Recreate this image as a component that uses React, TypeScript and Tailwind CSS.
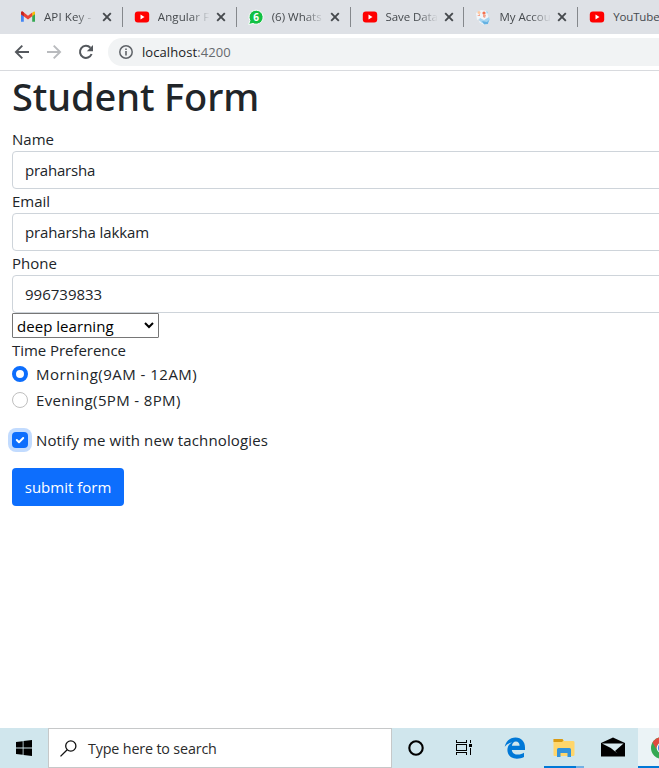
import React from 'react';

function Gmail() {
  return (
    <svg width="16" height="16" viewBox="0 0 16 16">
      <path d="M1 3.5v9.2h2.8V6.2z" fill="#4285f4" />
      <path d="M15 3.5v9.2h-2.8V6.2z" fill="#34a853" />
      <path d="M12.2 3.8L14 2.6q1-.2 1 1.2v1.4l-2.8 2z" fill="#fbbc04" />
      <path d="M1 5.2V3.8q0-1.6 1.6-1.2L8 6.8l4.2-3.2v3.6L8 10.4z" fill="#ea4335" />
      <path d="M1 5.2V3.8q0-1.6 1.6-1.2l1.2 1v3.6z" fill="#c5221f" />
    </svg>
  );
}

function YouTube() {
  return (
    <svg width="16" height="16" viewBox="0 0 16 16">
      <rect x="0.8" y="2.6" width="14.4" height="10.8" rx="3" fill="#f00" />
      <path d="M6.5 5.5v5l4-2.5z" fill="#fff" />
    </svg>
  );
}

function WhatsApp() {
  return (
    <svg width="16" height="16" viewBox="0 0 16 16">
      <path d="M.7 15.5l1.2-4A7 7 0 1 1 5 14.5z" fill="#12c043" stroke="#fff" strokeWidth="1" />
      <text x="8.2" y="11.7" textAnchor="middle" fontSize="10" fontWeight="700" fill="#fff" fontFamily="Open Sans, sans-serif">6</text>
    </svg>
  );
}

function Account() {
  return (
    <svg width="16" height="16" viewBox="0 0 16 16">
      <path d="M1 4l5-3 6 1 1 5 2 4-2 4-4 1-5-3 2-4-4 2z" fill="#f1f6fa" />
      <path d="M5 9l4 2 5-3 1 3-3 4-5-1-3-3z" fill="#a5d4f0" />
      <path d="M7 12l5 1 2-2-1 4-4 .5z" fill="#65b1e2" />
      <circle cx="4" cy="3.5" r="1.5" fill="#ffc9a1" />
      <circle cx="9" cy="4" r="1.6" fill="#f4724f" />
      <path d="M8 5l3 1-1 3-2-1zM2 7l3-2v2z" fill="#f5a38c" />
      <path d="M11 2l2 1-1 2z" fill="#9bd3f2" />
    </svg>
  );
}

const tabs = [
  { icon: <Gmail />, title: 'API Key - ', track: 'tracking-[0.1px]', close: true },
  { icon: <YouTube />, title: 'Angular F', track: 'tracking-[0.1px]', close: true },
  { icon: <WhatsApp />, title: '(6) Whats', track: 'tracking-normal', close: true },
  { icon: <YouTube />, title: 'Save Data', track: 'tracking-[-0.1px]', close: true },
  { icon: <Account />, title: 'My Accou', track: 'tracking-normal', close: true },
  { icon: <YouTube />, title: 'YouTube', track: 'tracking-[-0.15px]', close: false },
];

function TabStrip() {
  return (
    <div className="flex h-[34px] shrink-0 overflow-hidden bg-[#dee1e6] pl-[9px]">
      {tabs.map((tab, i) => (
        <div key={i} className={`flex h-[34px] shrink-0 items-center pl-[11px] ${tab.close ? 'w-[113.85px]' : 'w-[82px]'}`}>
          <span className="w-4 shrink-0">{tab.icon}</span>
          <span
            className={`ml-2 h-[18px] shrink-0 whitespace-pre text-[11.5px] leading-[18px] text-[#45494d] ${tab.track} ${
              tab.close ? 'w-[52px] [mask-image:linear-gradient(to_right,black_62%,transparent)]' : 'w-[46px]'
            }`}
          >
            {tab.title}
          </span>
          {tab.close && (
            <>
              <svg className="ml-[6px] shrink-0" width="10" height="10" viewBox="0 0 10 10">
                <path d="M1.2 1.2l7.6 7.6M8.8 1.2L1.2 8.8" stroke="#45494d" strokeWidth="1.9" />
              </svg>
              <span className="ml-auto h-5 w-px bg-[#85888c]" />
            </>
          )}
        </div>
      ))}
    </div>
  );
}

function Toolbar() {
  return (
    <div className="flex h-[37px] shrink-0 items-center border-b border-[#d8dade] bg-white pl-[14px]">
      <svg width="16" height="16" viewBox="0 0 16 16" fill="none" stroke="#54585d" strokeWidth="1.9">
        <path d="M15 8H2.4M8.3 1.6L1.9 8l6.4 6.4" />
      </svg>
      <svg className="ml-4" width="16" height="16" viewBox="0 0 16 16" fill="none" stroke="#b9bbbe" strokeWidth="1.9">
        <path d="M1 8h12.6M7.7 1.6L14.1 8l-6.4 6.4" />
      </svg>
      <svg className="ml-4" width="16" height="16" viewBox="0 0 16 16">
        <path d="M13.6 10A6 6 0 1 1 12.4 3.8" fill="none" stroke="#54585d" strokeWidth="2" />
        <path d="M15 1v6.2H8.8z" fill="#54585d" />
      </svg>
      <div className="ml-[14px] flex h-7 flex-1 items-center rounded-l-full bg-[#f1f3f4] pl-[11px]">
        <svg width="14" height="14" viewBox="0 0 14 14">
          <circle cx="7" cy="7" r="6.2" fill="none" stroke="#5f6368" strokeWidth="1.5" />
          <path d="M7 6v4.5M7 3.4v1.5" stroke="#5f6368" strokeWidth="1.6" />
        </svg>
        <span className="ml-[9px] text-[13px] leading-5 tracking-[0.08px] text-[#202124]">
          localhost<span className="text-[#666a6e]">:4200</span>
        </span>
      </div>
    </div>
  );
}

function Field({ label, value, track }: { label: string; value: string; track: string }) {
  return (
    <>
      <label className="h-6 leading-6">{label}</label>
      <div className={`flex h-[38px] w-[700px] items-center rounded border border-[#ced4da] bg-white px-3 ${track}`}>{value}</div>
    </>
  );
}

function StudentForm() {
  return (
    <main className="flex flex-1 flex-col items-start overflow-hidden pl-3 text-[15px] leading-6 text-[#212529]">
      <h1 className="mb-2 h-12 whitespace-nowrap font-['Noto_Sans','Open_Sans',sans-serif] text-[38px] font-medium leading-[50px] tracking-[-0.1px]">Student Form</h1>
      <Field label="Name" value="praharsha" track="tracking-[-0.22px]" />
      <Field label="Email" value="praharsha lakkam" track="tracking-[-0.13px]" />
      <Field label="Phone" value="996739833" track="tracking-normal" />
      <div className="flex h-[25px] w-[147px] items-center justify-between rounded-[1px] border border-[#767676] pl-1 pr-1 text-black">
        <span className="pt-px leading-[25px] tracking-[0.04px]">deep learning</span>
        <svg width="10" height="7" viewBox="0 0 10 7">
          <path d="M1 1l4 4 4-4" fill="none" stroke="#000" strokeWidth="2" />
        </svg>
      </div>
      <div className="h-6 tracking-[-0.05px]">Time Preference</div>
      <div className="mb-[2px] flex h-6 items-center">
        <span className="mr-2 size-4 rounded-full border-[4.5px] border-[#0d6efd] bg-white" />
        <span className="tracking-[0.48px]">Morning(9AM - 12AM)</span>
      </div>
      <div className="mb-4 flex h-6 items-center">
        <span className="mr-2 size-4 rounded-full border border-[#bfbfbf] bg-white" />
        <span className="tracking-[0.36px]">Evening(5PM - 8PM)</span>
      </div>
      <div className="mb-4 flex h-6 items-center">
        <span className="mr-2 flex size-4 items-center justify-center rounded bg-[#0d6efd] ring-4 ring-[#c2dbfe]">
          <svg width="16" height="16" viewBox="0 0 16 16">
            <path d="M4.8 8l2.2 2.2 4.2-4.2" fill="none" stroke="#fff" strokeWidth="2" strokeLinecap="round" strokeLinejoin="round" />
          </svg>
        </span>
        <span className="tracking-[0.14px]">Notify me with new tachnologies</span>
      </div>
      <button className="h-[38px] w-28 whitespace-nowrap rounded bg-[#0d6efd] text-white">submit form</button>
    </main>
  );
}

function Taskbar() {
  return (
    <footer className="flex h-10 shrink-0 overflow-hidden bg-[#d0e6ed]">
      <div className="flex w-12 items-center justify-center">
        <svg width="16" height="16" viewBox="0 0 16 16">
          <path d="M0 2l6.7-.8v6.3H0zM7.5 1.1L16 0v7.5H7.5zM0 8.4h6.7v6.4L0 14zM7.5 8.4H16V16l-8.5-1.1z" />
        </svg>
      </div>
      <div className="flex w-[344px] items-center border border-[#c6c8c9] bg-white pl-[11px]">
        <svg width="17" height="17" viewBox="0 0 17 17" fill="none" stroke="#111" strokeWidth="1.3">
          <circle cx="10.8" cy="6" r="5.1" />
          <path d="M7.2 9.7L.5 16.4" />
        </svg>
        <span className="ml-[11px] pt-[2px] text-[14.3px] leading-6 tracking-[-0.15px] text-[#2b2b2b]">Type here to search</span>
      </div>
      <div className="flex w-12 items-center justify-center">
        <svg width="16" height="16" viewBox="0 0 16 16">
          <circle cx="8" cy="8" r="6.7" fill="none" stroke="#000" strokeWidth="2.1" />
        </svg>
      </div>
      <div className="flex w-12 items-center justify-center">
        <svg width="16" height="16" viewBox="0 0 16 16" fill="none" stroke="#000" shapeRendering="crispEdges">
          <path d="M.5 0v2.5h10V0M.5 15v-2.5h10V15M.5 4.5h10v6H.5zM14.5 0v3M14.5 8v7" />
          <path d="M13 4h3v3h-3z" fill="#000" stroke="none" />
        </svg>
      </div>
      <div className="flex w-[54px] items-center justify-center">
        <svg width="22" height="22" viewBox="0 0 22 22">
          <path d="M.7 9.8C2 3.8 6.3.5 11.5.5 17.6.5 21 5 21 10.4v2.5H7.8c.3 3.2 3.2 4.7 6.2 4.7 2.3 0 4.3-.7 6-1.8v4.3c-2 1.1-4.5 1.7-7.1 1.7-5.8 0-9.5-3.7-9.5-8.8 0-3.3 1.7-6 4.8-7.8C5 6 2.3 7.4.7 9.8zM7.9 8.8h7.7c0-2.7-1.4-4.4-3.7-4.4-2.1 0-3.6 1.6-4 4.4z" fill="#0078d7" />
        </svg>
      </div>
      <div className="flex w-[43px] flex-col items-center justify-between pt-[10px]">
        <svg width="22" height="20" viewBox="0 0 22 20">
          <path d="M.5 2q0-1 1-1h8l1.5 2H20q1.5 0 1.5 1.3V17q0 1-1.5 1H1.5q-1 0-1-1z" fill="#ffd66b" />
          <path d="M.5 1h9l1 1.5L9 4H.5z" fill="#d99a13" />
          <path d="M4 19v-7.5Q4 10 5.5 10h11q1.5 0 1.5 1.5V19h-3.5v-4h-7v4z" fill="#3293db" />
        </svg>
        <div className="flex h-[2px] w-10">
          <span className="w-8 bg-[#0078d7]" />
          <span className="w-2 bg-[#72b0e4]" />
        </div>
      </div>
      <div className="flex w-[53px] items-center justify-center pl-[2px] pb-[2px]">
        <svg width="24" height="20" viewBox="0 0 24 20">
          <path d="M0 6L12 .5 24 6v13.5H0z" />
          <path d="M1 6.5h21.5l-8.5 7.5 2.3 2.2L9.8 11z" fill="#d8eaf0" />
        </svg>
      </div>
      <div className="flex w-[21px] flex-col justify-between overflow-hidden bg-[#ebf3f6] pt-[9px]">
        <svg className="ml-[13px] shrink-0" width="22" height="22" viewBox="0 0 22 22">
          <circle cx="11" cy="11" r="11" fill="#34a853" />
          <path d="M1.5 5.5A11 11 0 0 1 20.5 5.5H11a5.5 5.5 0 0 0-5 7.8z" fill="#e04a3f" />
          <circle cx="11" cy="11" r="5.3" fill="#fff" />
          <circle cx="11" cy="11" r="4.1" fill="#4285f4" />
        </svg>
        <span className="h-[2px] w-full bg-[#0078d7]" />
      </div>
    </footer>
  );
}

export default function App() {
  return (
    <div className="flex h-[768px] w-[659px] flex-col overflow-hidden bg-white font-['Open_Sans',sans-serif]">
      <TabStrip />
      <Toolbar />
      <StudentForm />
      <Taskbar />
    </div>
  );
}
